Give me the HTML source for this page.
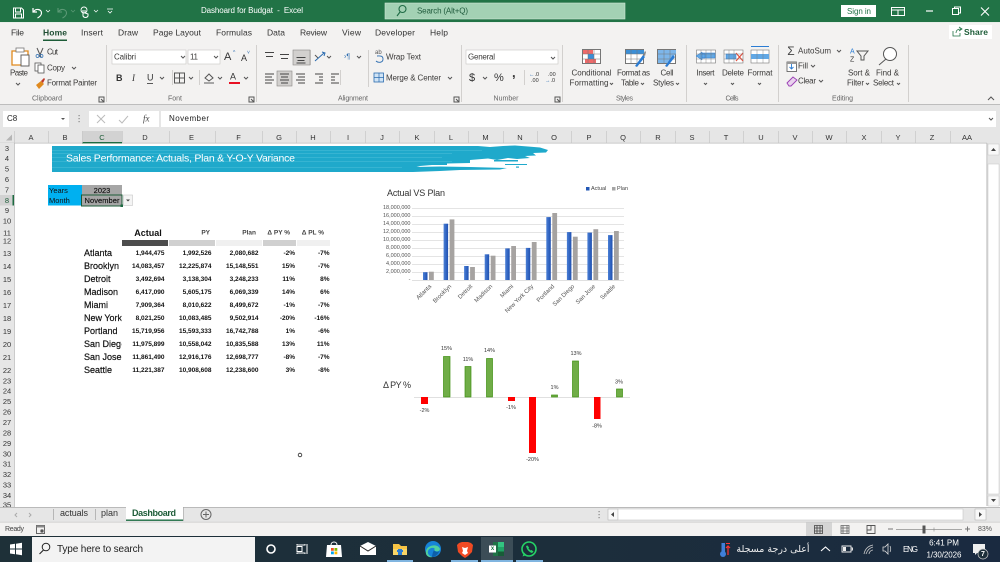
<!DOCTYPE html>
<html><head><meta charset="utf-8">
<style>
html,body{margin:0;padding:0;width:1000px;height:562px;overflow:hidden;background:#fff}
svg{display:block;font-family:"Liberation Sans",sans-serif}
text{dominant-baseline:central;fill:#333;white-space:pre}
.r{font-size:7.5px;fill:#333;text-anchor:middle}
.c{font-size:7.5px;fill:#333;text-anchor:middle}
.m{font-size:8px;fill:#3b3a39}
.g{font-size:7px;fill:#666;text-anchor:middle}
.t{font-size:8.5px;fill:#333}
.ct{font-size:9px;fill:#111;stroke:#111;stroke-width:.2}
.v{font-size:6.5px;fill:#111;text-anchor:end;font-weight:bold}
.y{font-size:5.5px;fill:#555;text-anchor:end}
.x{font-size:6px;fill:#555;text-anchor:end}
.l{font-size:5.5px;fill:#333;text-anchor:middle}
.ic{fill:none;stroke:#555;stroke-width:1}
</style></head><body>
<svg width="1000" height="562" viewBox="0 0 1000 562" xmlns="http://www.w3.org/2000/svg">
<defs>
<clipPath id="cc"><rect x="80" y="245" width="41.5" height="135"/></clipPath>
<linearGradient id="bl" x1="0" x2="1" y1="0" y2="0"><stop offset="0" stop-color="#4a7fd6"/><stop offset="1" stop-color="#1f50b0"/></linearGradient>
<linearGradient id="tb" x1="0" x2="1" y1="0" y2="0"><stop offset="0" stop-color="#1e3038"/><stop offset=".55" stop-color="#1c2e3b"/><stop offset="1" stop-color="#1a2a40"/></linearGradient>
</defs>

<!-- title bar -->
<rect width="1000" height="22" fill="#217346"/>
<rect x="385" y="3" width="240" height="16" fill="#a3d1b4" stroke="#cfe5d6" stroke-width=".6"/>
<g fill="none" stroke="#fff" stroke-width="1">
<path d="M13.5 8h8l2 2v8h-10zM15.5 8v4h5V8M15.5 18v-4h6v4" stroke-width="1"/>
<path d="M33 8v4h4M33.5 12c2-4 8-3 8 1 0 2-2 4-4 5" stroke-width="1.2"/>
<path d="M46 10l2 2 2-2" stroke-width=".7"/>
<path d="M58 8v4h4M58.500 12c2-4 8-3 8 1 0 2-2 4-4 5" stroke="#5d9a77" stroke-width="1.1"/>
<path d="M71 10l2 2 2-2" stroke="#5d9a77" stroke-width=".7"/>
<circle cx="84" cy="10" r="3" stroke-width=".9"/><path d="M83 10l0 6c1 2 4 2 5 0v-2l-3-1v-3"/>
<path d="M94 10l2 2 2-2" stroke-width=".7"/>
<path d="M107 9h6M108 11l2 2 2-2" stroke-width=".8"/>
</g>
<text x="201" y="10.5" font-size="8" textLength="102" style="fill:#fff">Dashoard for Budgat  -  Excel</text>
<g fill="none" stroke="#1f6b45" stroke-width="1.1"><circle cx="402.500" cy="9" r="3.500"/><path d="M400 12l-3 4"/></g>
<text x="417" y="11" font-size="8" textLength="51" style="fill:#1f5a3b">Search (Alt+Q)</text>
<rect x="841" y="5" width="35" height="12" fill="#fff"/>
<text x="847" y="11.500" font-size="8" textLength="24" style="fill:#217346">Sign in</text>
<g fill="none" stroke="#fff" stroke-width="1"><rect x="891.500" y="7.500" width="13" height="8"/><path d="M891.500 10h13M898 10v5.500"/><path d="M926 11h7" stroke-width="1.2"/><rect x="952.500" y="8.500" width="6" height="6"/><path d="M954.500 8.500v-1.500h6v6h-2"/><path d="M981 7.500l8 8M989 7.500l-8 8" stroke-width="1.1"/></g>

<!-- ribbon -->
<rect y="22" width="1000" height="82" fill="#f3f2f1"/>
<rect y="22" width="1000" height="1" fill="#e8eee9"/>
<g class="tabs">
<text x="11" y="32.500" class="t" textLength="13">File</text>
<text x="43" y="32.500" class="t" textLength="24" style="fill:#1d4d32;font-weight:bold">Home</text>
<text x="81" y="32.500" class="t" textLength="22">Insert</text>
<text x="118" y="32.500" class="t" textLength="20">Draw</text>
<text x="153" y="32.500" class="t" textLength="48">Page Layout</text>
<text x="216" y="32.500" class="t" textLength="36">Formulas</text>
<text x="267" y="32.500" class="t" textLength="18">Data</text>
<text x="300" y="32.500" class="t" textLength="27">Review</text>
<text x="342" y="32.500" class="t" textLength="19">View</text>
<text x="375" y="32.500" class="t" textLength="40">Developer</text>
<text x="430" y="32.500" class="t" textLength="18">Help</text>
</g>
<rect x="43" y="39.500" width="24" height="1.500" fill="#1d5c38"/>
<rect x="949" y="25" width="43" height="14" fill="#fff"/>
<g fill="none" stroke="#217346"><path d="M953 31v5h7v-3M956 33c0-3 2-4 5-4M959 27l3 2-3 2" stroke-width=".8"/></g>
<text x="964" y="32" font-size="8.500" textLength="24" style="fill:#1d5c38;font-weight:bold">Share</text>

<!-- group separators -->
<g fill="#d2d0ce"><rect x="106" y="45" width="1" height="57"/><rect x="256" y="45" width="1" height="57"/><rect x="461" y="45" width="1" height="57"/><rect x="562" y="45" width="1" height="57"/><rect x="686" y="45" width="1" height="57"/><rect x="778" y="45" width="1" height="57"/><rect x="908" y="45" width="1" height="57"/><rect x="310" y="50" width="1" height="15"/><rect x="368" y="50" width="1" height="37"/><rect x="524" y="70" width="1" height="15"/><rect x="172" y="70" width="1" height="15"/><rect x="199" y="70" width="1" height="15"/><rect x="340" y="70" width="1" height="15"/></g>

<!-- clipboard -->
<path d="M12 51h16v14H12z" fill="#fff" stroke="#e08a1e" stroke-width="1.300"/><rect x="16" y="48" width="8" height="4" fill="#fff" stroke="#777" stroke-width=".8"/><rect x="21" y="55" width="8" height="11" fill="#fff" stroke="#555" stroke-width=".9"/>
<text x="10" y="73" class="m" textLength="18">Paste</text>
<path class="ic" d="M16 83l2 2 2-2" stroke-width=".8"/>
<path class="ic" d="M37 48l4 9M43 48l-4 9" stroke="#444"/><circle cx="37.500" cy="56" r="1.500" fill="none" stroke="#2b6cb0" stroke-width=".7"/><circle cx="41.500" cy="56" r="1.500" fill="none" stroke="#2b6cb0" stroke-width=".7"/>
<text x="47" y="52" class="m" textLength="11">Cut</text>
<rect x="35" y="63" width="6" height="8" fill="#fff" stroke="#555" stroke-width=".8"/><rect x="38" y="65" width="6" height="8" fill="#fff" stroke="#555" stroke-width=".8"/>
<text x="47" y="68" class="m" textLength="18">Copy</text>
<path class="ic" d="M72 67l2 2 2-2" stroke-width=".8"/>
<path d="M36 85l5-4 3 3-5 5z" fill="#e08a1e"/><path d="M41 81l3-3 1 1-2 4" fill="#c0392b"/>
<text x="47" y="83" class="m" textLength="50">Format Painter</text>
<text x="47" y="99" class="g" style="text-anchor:middle" textLength="30">Clipboard</text>
<g class="ic" stroke-width=".7"><path d="M99 97h5v5h-5zM101 99l3 3"/><path d="M249 97h5v5h-5zM251 99l3 3"/><path d="M454 97h5v5h-5zM456 99l3 3"/><path d="M555 97h5v5h-5zM557 99l3 3"/></g>

<!-- font -->
<rect x="112" y="50" width="74" height="14" fill="#fff" stroke="#c8c6c4" stroke-width=".6"/>
<text x="114" y="57" class="m" textLength="22">Calibri</text><path class="ic" d="M181 56l2 2 2-2" stroke-width=".8"/>
<rect x="188" y="50" width="32" height="14" fill="#fff" stroke="#c8c6c4" stroke-width=".6"/>
<text x="190" y="57" class="m" textLength="8">11</text><path class="ic" d="M214 56l2 2 2-2" stroke-width=".8"/>
<text x="224" y="57" font-size="11" style="fill:#333">A</text><text x="233" y="53" font-size="5" style="fill:#2b6cb0">^</text>
<text x="241" y="58" font-size="9" style="fill:#333">A</text><text x="247" y="53" font-size="5" style="fill:#2b6cb0">˅</text>
<text x="116" y="78" font-size="9" font-weight="bold" style="fill:#333">B</text>
<text x="132" y="78" font-size="9" font-style="italic" font-family="Liberation Serif" style="fill:#333">I</text>
<text x="147" y="77.500" font-size="9" style="fill:#333">U</text><rect x="147" y="83" width="6" height=".8" fill="#333"/>
<path class="ic" d="M160 77l2 2 2-2" stroke-width=".8"/>
<path class="ic" d="M174.500 73h10v10h-10zM179.500 73v10M174.500 78h10" stroke="#777"/>
<path class="ic" d="M189 77l2 2 2-2" stroke-width=".8"/>
<path class="ic" d="M205 78l4-4 4 4-4 3z" stroke="#555"/><rect x="204" y="82" width="10" height="2" fill="#a6a6a6"/>
<path class="ic" d="M218 77l2 2 2-2" stroke-width=".8"/>
<text x="230" y="76.500" font-size="9" style="fill:#333">A</text><rect x="229" y="82" width="11" height="2" fill="#e81123"/>
<path class="ic" d="M244 77l2 2 2-2" stroke-width=".8"/>
<text x="175" y="99" class="g" textLength="14">Font</text>

<!-- alignment -->
<rect x="293" y="50" width="17" height="15" fill="#d2d0ce" stroke="#8a8886" stroke-width=".6"/>
<rect x="277" y="71" width="15" height="15" fill="#d2d0ce" stroke="#8a8886" stroke-width=".6"/>
<g stroke="#444" stroke-width="1" fill="none">
<path d="M265 52.500h9M266 56.500h7"/><path d="M280 54.500h9M281 58.500h7"/><path d="M296.500 57.500h9M297.500 60.500h7M296.500 63h9"/>
<path d="M265 74h9M265 77h7M265 80h9M265 83h7"/><path d="M280 74h9M281 77h7M280 80h9M281 83h7"/><path d="M296 74h9M298 77h7M296 80h9M298 83h7"/>
<path d="M315 74h8M319 77h4M319 80h4M315 83h8"/><path d="M331 74h8M331 77h4M331 80h4M331 83h8"/>
</g>
<path d="M315 61l9-8M322 52l3 1-1 3" fill="none" stroke="#2b6cb0" stroke-width="1"/><path d="M315 55l3 3" stroke="#555" stroke-width="1"/>
<path class="ic" d="M327 56l2 2 2-2" stroke-width=".8"/>
<text x="344" y="57" font-size="7" style="fill:#2b6cb0">›¶</text><path class="ic" d="M357 56l2 2 2-2" stroke-width=".8"/>
<text x="375" y="53" font-size="6" style="fill:#555">ab</text><path d="M376 61c2 2 7 2 7-2s-4-3-6-3" fill="none" stroke="#2b6cb0" stroke-width=".9"/>
<text x="386" y="57" class="m" textLength="35">Wrap Text</text>
<rect x="374" y="73" width="9.500" height="9" fill="#cfe3f5" stroke="#2b6cb0" stroke-width=".8"/><path d="M374 77.500h10M379 73v9" stroke="#2b6cb0" stroke-width=".7"/>
<text x="386" y="78" class="m" textLength="55">Merge &amp; Center</text>
<path class="ic" d="M448 77l2 2 2-2" stroke-width=".8"/>
<text x="353" y="99" class="g" textLength="30">Alignment</text>

<!-- number -->
<rect x="466" y="50" width="92" height="14" fill="#fff" stroke="#c8c6c4" stroke-width=".6"/>
<text x="468" y="57" class="m" textLength="27">General</text><path class="ic" d="M551 57l2 2 2-2" stroke-width=".8"/>
<text x="469" y="78" font-size="11" style="fill:#333">$</text><path class="ic" d="M483 77l2 2 2-2" stroke-width=".8"/>
<text x="494" y="78" font-size="11" style="fill:#333">%</text><text x="512" y="72.500" font-size="13" font-weight="bold" style="fill:#333">,</text>
<text x="529" y="75" font-size="5.500" style="fill:#2b6cb0">←<tspan style="fill:#333">.0</tspan></text><text x="531" y="81" font-size="5.500" style="fill:#333">.00</text>
<text x="548" y="75" font-size="5.500" style="fill:#333">.00</text><text x="545" y="81" font-size="5.500" style="fill:#2b6cb0">→<tspan style="fill:#333">.0</tspan></text>
<text x="506" y="99" class="g" textLength="25">Number</text>

<!-- styles -->
<rect x="582.500" y="49.500" width="18" height="14" fill="#fff" stroke="#555" stroke-width=".8"/><rect x="583" y="50" width="10" height="4" fill="#ef6a6a"/><rect x="588" y="54" width="6" height="5" fill="#3c8fd6"/><rect x="585" y="59" width="11" height="4" fill="#ef6a6a"/><path d="M588 50v13M594 50v13M583 54h18M583 59h18" stroke="#777" stroke-width=".5"/>
<rect x="625.500" y="49.500" width="18" height="14" fill="#fff" stroke="#555" stroke-width=".8"/><rect x="626" y="50" width="18" height="4" fill="#3c8fd6"/><path d="M631 50v13M637 50v13M626 54h18M626 59h18" stroke="#777" stroke-width=".5"/><path d="M635 66l8-11 2 2-8 10z" fill="#2b7cd3"/><path d="M643 55l2-4 1 1-1 4" fill="#888"/>
<rect x="657.500" y="49.500" width="18" height="14" fill="#fff" stroke="#555" stroke-width=".8"/><path d="M658 50h18v4l-9 9h-9z" fill="#7db6ea"/><path d="M664 50v13M670 50v13M658 54h18M658 59h18" stroke="#777" stroke-width=".5"/><path d="M665 66l8-11 2 2-8 10z" fill="#2b7cd3"/>
<text x="591.500" y="73" class="m" style="text-anchor:middle" textLength="40">Conditional</text>
<text x="589" y="83" class="m" style="text-anchor:middle" textLength="39">Formatting</text><path class="ic" d="M610 83l1.500 1.500 1.500-1.500" stroke-width=".7"/>
<text x="633.500" y="73" class="m" style="text-anchor:middle" textLength="33">Format as</text>
<text x="630" y="83" class="m" style="text-anchor:middle" textLength="18">Table</text><path class="ic" d="M641 83l1.500 1.500 1.500-1.500" stroke-width=".7"/>
<text x="667" y="73" class="m" style="text-anchor:middle" textLength="13">Cell</text>
<text x="663.500" y="83" class="m" style="text-anchor:middle" textLength="21">Styles</text><path class="ic" d="M676 83l1.500 1.500 1.500-1.500" stroke-width=".7"/>
<text x="624.500" y="99" class="g" textLength="17">Styles</text>

<!-- cells -->
<g stroke="#777" stroke-width=".6" fill="#fff"><rect x="696.500" y="50" width="19" height="13"/><rect x="724" y="50" width="19" height="13"/><rect x="751" y="50" width="18" height="13"/></g>
<path d="M702 53h13v5h-13zM696 56l6-4v2h3v4h-3v2z" fill="#62a8e5" stroke="#2b7cd3" stroke-width=".5"/>
<rect x="726" y="54" width="10" height="5" fill="#62a8e5" stroke="#2b7cd3" stroke-width=".5"/><path d="M736 53l7 8M743 53l-7 8" stroke="#e2503f" stroke-width="1.200"/>
<rect x="751" y="54" width="18" height="5" fill="#62a8e5"/><path d="M751 46.500h18" stroke="#2b7cd3"/>
<path d="M701 50v13M706 50v13M711 50v13M696 54h19M696 59h19M729 50v13M734 50v13M724 54h19M724 59h19M757 50v13M763 50v13" stroke="#777" stroke-width=".4"/>
<text x="705.500" y="73" class="m" style="text-anchor:middle" textLength="18">Insert</text>
<text x="733" y="73" class="m" style="text-anchor:middle" textLength="22">Delete</text>
<text x="760" y="73" class="m" style="text-anchor:middle" textLength="25">Format</text>
<g class="ic" stroke-width=".8"><path d="M704 83l1.500 1.500 1.500-1.500M731 83l1.500 1.500 1.500-1.500M758 83l1.500 1.500 1.500-1.500"/></g>
<text x="732" y="99" class="g" textLength="13">Cells</text>

<!-- editing -->
<text x="791" y="51" font-size="12" style="fill:#444;text-anchor:middle">Σ</text>
<text x="798" y="51" class="m" textLength="33">AutoSum</text><path class="ic" d="M837 50l2 2 2-2" stroke-width=".8"/>
<rect x="787" y="62" width="9.500" height="9.500" fill="#fff" stroke="#555" stroke-width=".8"/><path d="M791.500 64v5M789.500 67l2 2 2-2" fill="none" stroke="#2b7cd3" stroke-width=".9"/><rect x="787" y="62" width="9.500" height="2" fill="#999"/>
<text x="798" y="66" class="m" textLength="10">Fill</text><path class="ic" d="M811 65l2 2 2-2" stroke-width=".8"/>
<path d="M787 83l6-6 4 3-6 6h-2z" fill="#e9d3ee" stroke="#9b3fb5" stroke-width=".9"/>
<text x="798" y="81" class="m" textLength="18">Clear</text><path class="ic" d="M819 80l2 2 2-2" stroke-width=".8"/>
<text x="850" y="52" font-size="7" style="fill:#2b7cd3">A</text><text x="850" y="60" font-size="7" style="fill:#333">Z</text>
<path d="M857 51h11l-4 5v4h-3v-4z" fill="none" stroke="#555"/>
<text x="859" y="73" class="m" style="text-anchor:middle" textLength="22">Sort &amp;</text>
<text x="855.500" y="83" class="m" style="text-anchor:middle" textLength="17">Filter</text><path class="ic" d="M866 83l1.500 1.500 1.500-1.500" stroke-width=".7"/>
<circle cx="890" cy="54" r="6.500" fill="#fff" stroke="#555"/><path d="M886 59l-7 6" stroke="#555"/>
<text x="887.500" y="73" class="m" style="text-anchor:middle" textLength="23">Find &amp;</text>
<text x="873" y="83" class="m" textLength="21">Select</text><path class="ic" d="M897 83l1.500 1.500 1.500-1.500" stroke-width=".7"/>
<text x="842.500" y="99" class="g" textLength="21">Editing</text>
<path class="ic" d="M988 100l3-3 3 3" stroke-width=".9"/>

<!-- formula bar -->
<rect y="104" width="1000" height="2" fill="#c8c8c8"/>
<rect y="105" width="1000" height="25" fill="#e6e6e6"/>
<rect y="104" width="1000" height="1" fill="#bdbdbd"/>
<rect x="3" y="111" width="66" height="16" fill="#fff"/>
<text x="7" y="118.500" class="m" style="fill:#222">C8</text><path d="M61 118l2 2 2-2z" fill="#555"/>
<g fill="#888"><rect x="78.500" y="115" width="1.200" height="1.200"/><rect x="78.500" y="118" width="1.200" height="1.200"/><rect x="78.500" y="121" width="1.200" height="1.200"/></g>
<rect x="89" y="111" width="70" height="16" fill="#fff"/>
<path d="M97 115l8 8M105 115l-8 8" stroke="#bbb"/><path d="M119 120l3 3 6-7" fill="none" stroke="#bbb"/>
<text x="143" y="118.500" font-size="9" font-style="italic" font-family="Liberation Serif" style="fill:#444">fx</text>
<rect x="161" y="111" width="835" height="16" fill="#fff"/>
<text x="169" y="118.500" class="m" textLength="40" style="fill:#222">November</text>
<path class="ic" d="M989 118l2 2 2-2" stroke="#333"/>

<!-- col headers -->
<rect y="130" width="1000" height="13.500" fill="#e6e6e6"/>
<rect y="142.800" width="987" height=".6" fill="#b5b5b5"/>
<rect x="82" y="131" width="40" height="12" fill="#d2d2d2"/><rect x="82" y="142" width="40" height="1.400" fill="#1d6b41"/>
<path d="M12 140.500l-6 0 6-6z" fill="#b5b5b5"/>
<g fill="#c6c6c6"><rect x="14" y="131" width=".7" height="12"/><rect x="48" y="131" width=".7" height="12"/><rect x="82" y="131" width=".7" height="12"/><rect x="122" y="131" width=".7" height="12"/><rect x="169" y="131" width=".7" height="12"/><rect x="215" y="131" width=".7" height="12"/><rect x="262" y="131" width=".7" height="12"/><rect x="296" y="131" width=".7" height="12"/><rect x="330" y="131" width=".7" height="12"/><rect x="365" y="131" width=".7" height="12"/><rect x="399" y="131" width=".7" height="12"/><rect x="434" y="131" width=".7" height="12"/><rect x="468" y="131" width=".7" height="12"/><rect x="503" y="131" width=".7" height="12"/><rect x="537" y="131" width=".7" height="12"/><rect x="571" y="131" width=".7" height="12"/><rect x="606" y="131" width=".7" height="12"/><rect x="640" y="131" width=".7" height="12"/><rect x="675" y="131" width=".7" height="12"/><rect x="709" y="131" width=".7" height="12"/><rect x="743" y="131" width=".7" height="12"/><rect x="778" y="131" width=".7" height="12"/><rect x="812" y="131" width=".7" height="12"/><rect x="846" y="131" width=".7" height="12"/><rect x="881" y="131" width=".7" height="12"/><rect x="915" y="131" width=".7" height="12"/><rect x="950" y="131" width=".7" height="12"/></g>
<g>
<text class="c" x="31" y="137.500">A</text><text class="c" x="65" y="137.500">B</text><text class="c" x="102" y="137.500" style="fill:#1d5c38">C</text><text class="c" x="145" y="137.500">D</text><text class="c" x="191.500" y="137.500">E</text><text class="c" x="238.500" y="137.500">F</text><text class="c" x="279" y="137.500">G</text><text class="c" x="313" y="137.500">H</text><text class="c" x="348" y="137.500">I</text><text class="c" x="382" y="137.500">J</text><text class="c" x="417" y="137.500">K</text><text class="c" x="451" y="137.500">L</text><text class="c" x="485.500" y="137.500">M</text><text class="c" x="520" y="137.500">N</text><text class="c" x="554" y="137.500">O</text><text class="c" x="589" y="137.500">P</text><text class="c" x="623" y="137.500">Q</text><text class="c" x="658" y="137.500">R</text><text class="c" x="692" y="137.500">S</text><text class="c" x="726" y="137.500">T</text><text class="c" x="761" y="137.500">U</text><text class="c" x="795" y="137.500">V</text><text class="c" x="829" y="137.500">W</text><text class="c" x="864" y="137.500">X</text><text class="c" x="898" y="137.500">Y</text><text class="c" x="932" y="137.500">Z</text><text class="c" x="967" y="137.500">AA</text>
</g>

<!-- row headers -->
<rect y="143" width="14" height="364" fill="#e6e6e6"/>
<rect x="14" y="143" width=".7" height="364" fill="#b5b5b5"/>
<rect y="195" width="14" height="10.500" fill="#d2d2d2"/><rect x="12.500" y="195" width="1.500" height="10.500" fill="#1d6b41"/>
<g>
<text class="r" x="7" y="148.500">3</text><text class="r" x="7" y="158.500">4</text><text class="r" x="7" y="169">5</text><text class="r" x="7" y="179.500">6</text><text class="r" x="7" y="190">7</text><text class="r" x="7" y="200.500" style="fill:#1d5c38">8</text><text class="r" x="7" y="210.500">9</text><text class="r" x="7" y="221">10</text><text class="r" x="7" y="233">11</text><text class="r" x="7" y="241" font-size="5">12</text><text class="r" x="7" y="253.500">13</text><text class="r" x="7" y="266.500">14</text><text class="r" x="7" y="279.500">15</text><text class="r" x="7" y="292.500">16</text><text class="r" x="7" y="305.500">17</text><text class="r" x="7" y="318.500">18</text><text class="r" x="7" y="331.500">19</text><text class="r" x="7" y="344.500">20</text><text class="r" x="7" y="357.500">21</text><text class="r" x="7" y="370.500">22</text><text class="r" x="7" y="381">23</text><text class="r" x="7" y="391">24</text><text class="r" x="7" y="401.500">25</text><text class="r" x="7" y="412">26</text><text class="r" x="7" y="422.500">27</text><text class="r" x="7" y="433">28</text><text class="r" x="7" y="443.500">29</text><text class="r" x="7" y="454">30</text><text class="r" x="7" y="464">31</text><text class="r" x="7" y="474.500">32</text><text class="r" x="7" y="485">33</text><text class="r" x="7" y="495.500">34</text><text class="r" x="7" y="505">35</text>
</g>

<!-- banner -->
<g fill="#1fa9cb">
<rect x="52" y="146" width="361" height="26"/>
<path d="M413 146L478 146L490 147L503 146L515 145.500L528 146.500L540 147.500L548 150L546 152.500L533 153L536 155.500L525 156L530 158L517 159L508 158L497 160L488 158.500L470 160L470 163L447 163.500L447 165L432 165L420 166L413 168z"/>
<path d="M413 167L440 166.500L470 167L507 168L500 169.500L460 170L440 171L413 172z"/>
<rect x="494" y="160" width="24" height="1.500"/>
<rect x="505" y="164" width="22" height="1"/>
<rect x="516" y="166.500" width="3" height="1.200"/>
</g>
<g fill="#58c3dc" opacity=".6"><rect x="52" y="150" width="430" height=".7"/><rect x="52" y="153" width="400" height=".7"/><rect x="52" y="157" width="390" height=".7"/><rect x="52" y="161" width="400" height=".7"/><rect x="52" y="167" width="350" height=".7"/></g>
<text x="66" y="158.500" font-size="10.500" textLength="229" style="fill:#fff">Sales Performance: Actuals, Plan &amp; Y-O-Y Variance</text>

<!-- selector -->
<rect x="48" y="185" width="34" height="20.500" fill="#00b0f0"/>
<rect x="82" y="185" width="40" height="10" fill="#a6a6a6"/><rect x="82" y="195" width="40" height="10.500" fill="#a6a6a6"/>
<text x="49" y="190.500" font-size="7.500" style="fill:#111">Years</text><text x="49" y="200.500" font-size="7.500" style="fill:#111">Month</text>
<text x="102" y="190.500" font-size="7.500" style="fill:#111;text-anchor:middle;stroke:#111;stroke-width:.15">2023</text>
<text x="102" y="200.500" font-size="7.500" textLength="35" style="fill:#111;text-anchor:middle;stroke:#111;stroke-width:.15">November</text>
<rect x="81.500" y="195" width="40.500" height="11" fill="none" stroke="#1d5c38" stroke-width="1"/>
<rect x="120.500" y="204.500" width="2.500" height="2.500" fill="#1d6b41"/>
<rect x="123.500" y="195" width="9" height="10.500" fill="#f4f4f4" stroke="#c6c6c6" stroke-width=".6"/><path d="M126 199.500h4l-2 2z" fill="#444"/>

<!-- table -->
<text x="148" y="233" font-size="9" font-weight="bold" style="fill:#111;text-anchor:middle">Actual</text>
<text x="210" y="233" font-size="6.500" style="fill:#444;text-anchor:end;font-weight:bold">PY</text>
<text x="256" y="233" font-size="6.500" style="fill:#444;text-anchor:end;font-weight:bold">Plan</text>
<text x="290" y="233" font-size="6.500" style="fill:#444;text-anchor:end;font-weight:bold">Δ PY %</text>
<text x="324" y="233" font-size="6.500" style="fill:#444;text-anchor:end;font-weight:bold">Δ PL %</text>
<rect x="122" y="240" width="46" height="6" fill="#4d4d4d"/><rect x="169" y="240" width="46" height="6" fill="#d0d0d0"/><rect x="216" y="240" width="46" height="6" fill="#f0f0f0"/><rect x="263" y="240" width="33" height="6" fill="#d0d0d0"/><rect x="297" y="240" width="33" height="6" fill="#f0f0f0"/>
<g clip-path="url(#cc)">
<text class="ct" x="84" y="253">Atlanta</text><text class="ct" x="84" y="266">Brooklyn</text><text class="ct" x="84" y="279">Detroit</text><text class="ct" x="84" y="292">Madison</text><text class="ct" x="84" y="305">Miami</text><text class="ct" x="84" y="318">New York City</text><text class="ct" x="84" y="331">Portland</text><text class="ct" x="84" y="344">San Diego</text><text class="ct" x="84" y="357">San Jose</text><text class="ct" x="84" y="370">Seattle</text>
</g>
<g>
<text class="v" x="164.500" y="253.500">1,944,475</text><text class="v" x="211.500" y="253.500">1,992,526</text><text class="v" x="258.500" y="253.500">2,080,682</text><text class="v" x="295" y="253.500">-2%</text><text class="v" x="329.500" y="253.500">-7%</text>
<text class="v" x="164.500" y="266.500">14,083,457</text><text class="v" x="211.500" y="266.500">12,225,874</text><text class="v" x="258.500" y="266.500">15,148,551</text><text class="v" x="295" y="266.500">15%</text><text class="v" x="329.500" y="266.500">-7%</text>
<text class="v" x="164.500" y="279.500">3,492,694</text><text class="v" x="211.500" y="279.500">3,138,304</text><text class="v" x="258.500" y="279.500">3,248,233</text><text class="v" x="295" y="279.500">11%</text><text class="v" x="329.500" y="279.500">8%</text>
<text class="v" x="164.500" y="292.500">6,417,090</text><text class="v" x="211.500" y="292.500">5,605,175</text><text class="v" x="258.500" y="292.500">6,069,339</text><text class="v" x="295" y="292.500">14%</text><text class="v" x="329.500" y="292.500">6%</text>
<text class="v" x="164.500" y="305.500">7,909,364</text><text class="v" x="211.500" y="305.500">8,010,622</text><text class="v" x="258.500" y="305.500">8,499,672</text><text class="v" x="295" y="305.500">-1%</text><text class="v" x="329.500" y="305.500">-7%</text>
<text class="v" x="164.500" y="318.500">8,021,250</text><text class="v" x="211.500" y="318.500">10,083,485</text><text class="v" x="258.500" y="318.500">9,502,914</text><text class="v" x="295" y="318.500">-20%</text><text class="v" x="329.500" y="318.500">-16%</text>
<text class="v" x="164.500" y="331.500">15,719,956</text><text class="v" x="211.500" y="331.500">15,593,333</text><text class="v" x="258.500" y="331.500">16,742,788</text><text class="v" x="295" y="331.500">1%</text><text class="v" x="329.500" y="331.500">-6%</text>
<text class="v" x="164.500" y="344.500">11,975,899</text><text class="v" x="211.500" y="344.500">10,558,042</text><text class="v" x="258.500" y="344.500">10,835,588</text><text class="v" x="295" y="344.500">13%</text><text class="v" x="329.500" y="344.500">11%</text>
<text class="v" x="164.500" y="357.500">11,861,490</text><text class="v" x="211.500" y="357.500">12,916,176</text><text class="v" x="258.500" y="357.500">12,698,777</text><text class="v" x="295" y="357.500">-8%</text><text class="v" x="329.500" y="357.500">-7%</text>
<text class="v" x="164.500" y="370.500">11,221,387</text><text class="v" x="211.500" y="370.500">10,908,608</text><text class="v" x="258.500" y="370.500">12,238,600</text><text class="v" x="295" y="370.500">3%</text><text class="v" x="329.500" y="370.500">-8%</text>
</g>

<!-- chart 1 -->
<text x="387" y="193" font-size="9" textLength="58" style="fill:#333">Actual VS Plan</text>
<rect x="586" y="187" width="3.500" height="3.500" fill="#2257b5"/><text x="591" y="189" font-size="5.500" style="fill:#444">Actual</text>
<rect x="612" y="187" width="3.500" height="3.500" fill="#a5a5a5"/><text x="617" y="189" font-size="5.500" style="fill:#444">Plan</text>
<g fill="#d9d9d9"><rect x="412" y="208" width="212" height=".7"/><rect x="412" y="216" width="212" height=".7"/><rect x="412" y="224" width="212" height=".7"/><rect x="412" y="232" width="212" height=".7"/><rect x="412" y="240" width="212" height=".7"/><rect x="412" y="248" width="212" height=".7"/><rect x="412" y="256" width="212" height=".7"/><rect x="412" y="264" width="212" height=".7"/><rect x="412" y="272" width="212" height=".7"/><rect x="412" y="280" width="212" height=".8"/></g>
<text class="y" x="410.500" y="208">18,000,000</text><text class="y" x="410.500" y="216">16,000,000</text><text class="y" x="410.500" y="224">14,000,000</text><text class="y" x="410.500" y="232">12,000,000</text><text class="y" x="410.500" y="240">10,000,000</text><text class="y" x="410.500" y="248">8,000,000</text><text class="y" x="410.500" y="256">6,000,000</text><text class="y" x="410.500" y="264">4,000,000</text><text class="y" x="410.500" y="272">2,000,000</text><text class="y" x="410.500" y="280">-</text>
<g fill="url(#bl)">
<rect x="423" y="272.200" width="4.500" height="7.800"/><rect x="443.600" y="223.700" width="4.500" height="56.300"/><rect x="464.100" y="266" width="4.500" height="14"/><rect x="484.700" y="254.300" width="4.500" height="25.700"/><rect x="505.200" y="248.400" width="4.500" height="31.600"/><rect x="525.800" y="247.900" width="4.500" height="32.100"/><rect x="546.300" y="217.100" width="4.500" height="62.900"/><rect x="566.900" y="232.100" width="4.500" height="47.900"/><rect x="587.400" y="232.600" width="4.500" height="47.400"/><rect x="608" y="235.100" width="4.500" height="44.900"/>
</g>
<g fill="#a6a3a1">
<rect x="429" y="271.700" width="4.800" height="8.300"/><rect x="449.600" y="219.400" width="4.800" height="60.600"/><rect x="470.100" y="267" width="4.800" height="13"/><rect x="490.700" y="255.700" width="4.800" height="24.300"/><rect x="511.200" y="246" width="4.800" height="34"/><rect x="531.800" y="242" width="4.800" height="38"/><rect x="552.300" y="213" width="4.800" height="67"/><rect x="572.900" y="236.700" width="4.800" height="43.300"/><rect x="593.400" y="229.200" width="4.800" height="50.800"/><rect x="614" y="231" width="4.800" height="49"/>
</g>
<g>
<text class="x" transform="translate(431,286) rotate(-45)">Atlanta</text><text class="x" transform="translate(451,286) rotate(-45)">Brooklyn</text><text class="x" transform="translate(472,286) rotate(-45)">Detroit</text><text class="x" transform="translate(492,286) rotate(-45)">Madison</text><text class="x" transform="translate(513,286) rotate(-45)">Miami</text><text class="x" transform="translate(533,286) rotate(-45)">New York City</text><text class="x" transform="translate(554,286) rotate(-45)">Portland</text><text class="x" transform="translate(574,286) rotate(-45)">San Diego</text><text class="x" transform="translate(595,286) rotate(-45)">San Jose</text><text class="x" transform="translate(615,286) rotate(-45)">Seattle</text>
</g>

<!-- chart 2 -->
<text x="383" y="385" font-size="9" textLength="28" style="fill:#333">Δ PY %</text>
<rect x="414" y="397" width="216" height=".8" fill="#d9d9d9"/>
<g fill="#ff0000"><rect x="421" y="397" width="7" height="7"/><rect x="508" y="397" width="7" height="4"/><rect x="529" y="397" width="7" height="56"/><rect x="594" y="397" width="6.500" height="22"/></g>
<g fill="#70ad47" stroke="#3f8f12" stroke-width=".7"><rect x="443.500" y="356.500" width="6.500" height="40.500"/><rect x="465" y="366.500" width="6" height="30.500"/><rect x="486.500" y="358.500" width="6" height="38.500"/><rect x="551.500" y="395" width="6" height="2"/><rect x="572.500" y="361" width="6" height="36"/><rect x="616.500" y="389" width="6" height="8"/></g>
<text class="l" x="424.500" y="411">-2%</text><text class="l" x="446.500" y="349">15%</text><text class="l" x="468" y="360">11%</text><text class="l" x="489.500" y="351">14%</text><text class="l" x="511" y="408">-1%</text><text class="l" x="532.500" y="460">-20%</text><text class="l" x="554.500" y="388">1%</text><text class="l" x="576" y="354">13%</text><text class="l" x="597" y="426.500">-8%</text><text class="l" x="619" y="382.500">3%</text>

<circle cx="300" cy="455" r="1.800" fill="#fff" stroke="#222" stroke-width=".8"/>

<!-- vertical scrollbar -->
<rect x="987" y="143" width="13" height="363" fill="#e6e6e6"/>
<rect x="986.500" y="143" width=".8" height="363" fill="#b5b5b5"/>
<rect x="988" y="144" width="11" height="11" fill="#f8f8f8" stroke="#c6c6c6" stroke-width=".5"/><path d="M991 151l2.500-3 2.500 3z" fill="#444"/>
<rect x="988" y="164" width="11" height="330" fill="#fff" stroke="#c6c6c6" stroke-width=".5"/>
<rect x="988" y="496" width="11" height="10" fill="#f8f8f8" stroke="#c6c6c6" stroke-width=".5"/><path d="M991 499l2.500 3 2.500-3z" fill="#444"/>

<!-- sheet tabs -->
<rect y="507" width="1000" height="15" fill="#e6e6e6"/>
<rect y="507" width="1000" height=".9" fill="#b5b5b5"/>
<rect y="522" width="1000" height="14" fill="#f3f2f1"/>
<rect y="521.800" width="1000" height=".7" fill="#c8c8c8"/>
<path d="M17 513l-2 2 2 2M29 513l2 2-2 2" fill="none" stroke="#aaa"/>
<rect x="53" y="509" width=".8" height="11" fill="#aaa"/><rect x="95" y="509" width=".8" height="11" fill="#aaa"/>
<text x="60" y="513" font-size="9" textLength="28" style="fill:#333">actuals</text>
<text x="101" y="513" font-size="9" textLength="17" style="fill:#333">plan</text>
<rect x="126" y="507" width="57" height="14" fill="#fff"/><rect x="126" y="519.500" width="57" height="1.400" fill="#1d6b41"/><rect x="183" y="507" width=".7" height="14" fill="#aaa"/>
<text x="132" y="513" font-size="9" textLength="44" style="fill:#1d5c38;font-weight:bold">Dashboard</text>
<circle cx="206" cy="514.500" r="5" fill="none" stroke="#666"/><path d="M203 514.500h6M206 511.500v6" stroke="#666"/>
<g fill="#888"><rect x="598.500" y="511" width="1.200" height="1.200"/><rect x="598.500" y="514" width="1.200" height="1.200"/><rect x="598.500" y="517" width="1.200" height="1.200"/></g>
<rect x="608" y="509" width="10" height="11" fill="#f8f8f8" stroke="#b5b5b5" stroke-width=".6"/><path d="M611 514.500l3-2.500v5z" fill="#444"/>
<rect x="618" y="509" width="345" height="11" fill="#fff" stroke="#c6c6c6" stroke-width=".6"/>
<rect x="975" y="509" width="11" height="11" fill="#f8f8f8" stroke="#b5b5b5" stroke-width=".6"/><path d="M979 512l3 2.500-3 2.500z" fill="#444"/>

<!-- status -->
<text x="5" y="529.500" font-size="7" textLength="19" style="fill:#444">Ready</text>
<rect x="36.500" y="525.500" width="8" height="8" fill="none" stroke="#666"/><rect x="36.500" y="525.500" width="8" height="2" fill="#888"/><circle cx="42" cy="531" r="2" fill="#555" stroke="#f3f2f1" stroke-width=".5"/>
<rect x="806" y="522.500" width="26" height="13.500" fill="#d5d5d5"/>
<path d="M814.500 525.500h8v8h-8zM814.500 528h8M814.500 531h8M817 525.500v8M820 525.500v8" fill="none" stroke="#444" stroke-width=".8"/>
<path d="M841 525.500h8v8h-8zM843 525.500v8M847 525.500v8M841 528h8M841 531h8" fill="none" stroke="#666" stroke-width=".8"/>
<path d="M867 525.500h8v8h-8zM867 530h4v-4.500" fill="none" stroke="#555" stroke-width=".9"/>
<rect x="888" y="528.500" width="5" height="1" fill="#777"/><rect x="896" y="529" width="66" height=".7" fill="#888"/><rect x="922.500" y="525.500" width="3" height="8" fill="#555"/><path d="M934 527.500v4" stroke="#888" stroke-width=".6"/>
<path d="M965 529h5M967.500 526.500v5" stroke="#777"/>
<text x="978" y="529.500" font-size="7" style="fill:#555">83%</text>

<!-- taskbar -->
<rect y="536" width="1000" height="26" fill="url(#tb)"/>
<g fill="#fff"><path d="M10 544.500l5-.7v4.700h-5zM16 543.700l6-.9v5.700h-6zM10 549.500h5v4.700l-5-.7zM16 549.500h6v5.700l-6-.9z"/></g>
<rect x="32" y="537" width="223" height="25" fill="#f3f3f3"/>
<circle cx="46" cy="547" r="3.800" fill="none" stroke="#222" stroke-width="1"/><path d="M43.500 550l-4 4" stroke="#222" stroke-width="1.100"/>
<text x="57" y="549.500" font-size="10" textLength="86" style="fill:#222">Type here to search</text>
<circle cx="271" cy="549" r="4" fill="none" stroke="#fff" stroke-width="1.600"/>
<path d="M297 544v1h8v-1M297 554v-1h8v1M297 546.500h5v5h-5zM307 544v10" fill="none" stroke="#fff" stroke-width="1"/>
<path d="M327 545h14l1 12h-16z" fill="#fff"/><path d="M331 545c0-4 6-4 6 0" fill="none" stroke="#fff"/>
<rect x="331" y="548" width="2.800" height="2.800" fill="#f25022"/><rect x="334.500" y="548" width="2.800" height="2.800" fill="#7fba00"/><rect x="331" y="551.500" width="2.800" height="2.800" fill="#00a4ef"/><rect x="334.500" y="551.500" width="2.800" height="2.800" fill="#ffb900"/>
<path d="M360 546l8-4 8 4v9h-16z" fill="#fff"/><path d="M360 546l8 5 8-5" fill="none" stroke="#222"/>
<path d="M393 544h6l2 2h6v4h-14z" fill="#f6c445"/><path d="M393 549h14v6h-14z" fill="#fad666"/><path d="M398 549h4v6h-4z" fill="#2b7cd3"/><rect x="397" y="550" width="6" height="2" fill="#2b7cd3"/>
<circle cx="433" cy="549" r="8" fill="#1683d8"/><path d="M426 551c1-6 12-8 14-2 0 3-5 3-6 1 3-2-4-4-6 1-1 3 2 6 5 6-5 1-8-2-7-6z" fill="#4fd0a0"/><path d="M434 550c2 3 6 2 6-1-1 5-5 8-8 8 0-2 1-5 2-7z" fill="#0d5fa8"/>
<path d="M459 543l3-1h6l3 1 2 2-1 7-4 4-3 2-3-2-4-4-1-7z" fill="#f04a23"/><path d="M462 547l3 1 3-1-1 4 1 2-3 2-3-2 1-2z" fill="#fff"/>
<rect x="481" y="537" width="32" height="25" fill="#3c4d57"/>
<rect x="493" y="542" width="11" height="14" fill="#1f7246"/><rect x="498" y="542" width="6" height="5" fill="#33c481"/><rect x="498" y="547" width="6" height="4.500" fill="#21a366"/><rect x="498" y="551.500" width="6" height="4.500" fill="#185c37"/>
<rect x="489" y="545.500" width="7" height="7" fill="#fff"/><text x="492.500" y="549" font-size="6" font-weight="bold" style="fill:#1f7246;text-anchor:middle">x</text>
<circle cx="529" cy="549" r="7" fill="none" stroke="#25d366" stroke-width="1.600"/><path d="M522.500 556.500l1.500-4 2.500 2.500z" fill="#25d366"/><path d="M526 546c1 4 3 6 6 7l1.500-1.500-2-1.500-1 .5-2-2 .5-1-1.500-2z" fill="#25d366"/>
<g fill="#80b5e0"><rect x="387" y="560" width="26" height="2"/><rect x="451" y="560" width="27" height="2"/><rect x="481" y="560" width="32" height="2"/><rect x="516" y="560" width="27" height="2"/></g>

<rect x="721.500" y="543" width="3.500" height="9" fill="#3f7fd8"/><circle cx="723" cy="554" r="3" fill="#3f7fd8"/><path d="M728 546v9M726 548l2-2 2 2" fill="none" stroke="#f33" stroke-width="1.200"/><rect x="726" y="543" width="4" height="1" fill="#f33"/>
<text x="773" y="549.500" font-size="9.500" style="fill:#eee;text-anchor:middle;font-family:'DejaVu Sans',sans-serif" direction="rtl">أعلى درجة مسجلة</text>
<path d="M821 551l4.500-4 4.500 4" fill="none" stroke="#fff" stroke-width="1.100"/>
<path d="M842 546h9v6h-9zM851 548h1.500v2H851" fill="none" stroke="#eee" stroke-width=".9"/><rect x="843" y="547" width="3" height="4" fill="#eee"/>
<path d="M864 554c1-5 4-8 9-9M866 554c1-3 3-6 7-7M869 554c0-2 2-4 4-4" fill="none" stroke="#ccc" stroke-width=".8"/>
<path d="M883 547h2l3-3v10l-3-3h-2z" fill="none" stroke="#ddd" stroke-width=".8"/><path d="M890 546c1 2 1 4 0 6" fill="none" stroke="#ddd" stroke-width=".7"/>
<text x="903" y="549.500" font-size="8" textLength="15" style="fill:#fff">ENG</text>
<text x="944" y="543" font-size="8" style="fill:#fff;text-anchor:middle">6:41 PM</text>
<text x="944" y="555" font-size="8" style="fill:#fff;text-anchor:middle" textLength="35">1/30/2026</text>
<path d="M973 544h12v9h-8l-2 2v-2h-2z" fill="#eee"/><circle cx="983" cy="554" r="5" fill="#1d2f3a" stroke="#ccc" stroke-width=".7"/><text x="983" y="554.500" font-size="7" font-weight="bold" style="fill:#fff;text-anchor:middle">7</text>
</svg>
</body></html>
